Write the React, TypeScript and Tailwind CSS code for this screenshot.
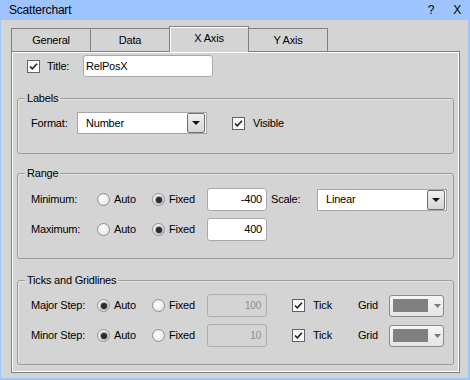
import type { ReactNode } from 'react';

function CheckBox() {
  return (
    <span className="flex h-[13px] w-[13px] shrink-0 items-center justify-center border border-[#5f6368] bg-gradient-to-br from-[#f4f4f4] to-white">
      <svg width="11" height="11" viewBox="0 0 11 11">
        <path d="M2 5.5 L4.3 7.8 L9 2.8" fill="none" stroke="#222" strokeWidth="1.6" />
      </svg>
    </span>
  );
}

function Radio({ checked, label }: { checked?: boolean; label: string }) {
  return (
    <span className="flex w-[55px] items-center gap-[4px]">
      <span className="flex h-[13px] w-[13px] shrink-0 items-center justify-center rounded-full border border-[#8e8f8f] bg-[radial-gradient(circle_at_40%_40%,#ffffff,#dedede)]">
        {checked && <span className="h-[6px] w-[6px] rounded-full bg-[#2b2b2b] shadow-[0_0_1px_1px_#9a9a9a]" />}
      </span>
      <span>{label}</span>
    </span>
  );
}

function Select({ value, width }: { value: string; width: string }) {
  return (
    <div className={`flex h-[22px] items-center justify-between border border-[#a6a6a6] bg-white ${width}`}>
      <span className="pl-[8px]">{value}</span>
      <span className="mr-px flex h-[20px] w-[18px] items-center justify-center rounded-[2px] border border-[#6f6f6f] bg-gradient-to-b from-[#f0f0f0] to-[#d6d6d6]">
        <svg width="8" height="4" viewBox="0 0 8 4">
          <path d="M0 0 H8 L4 4 Z" fill="#111" />
        </svg>
      </span>
    </div>
  );
}

function NumInput({ value, disabled }: { value: string; disabled?: boolean }) {
  return (
    <div
      className={
        disabled
          ? 'flex h-[23px] w-[60px] items-center justify-end rounded-[3px] border border-[#adadad] bg-[#d4d4d4] pr-[5px] text-[10px] text-[#8c8c8c]'
          : 'flex h-[23px] w-[60px] items-center justify-end rounded-[3px] border border-[#a8a8a8] bg-white pr-[4px]'
      }
    >
      {value}
    </div>
  );
}

function ColorCombo() {
  return (
    <div className="flex h-[22px] w-[55px] items-center rounded-[3px] border border-[#8a8a8a] bg-gradient-to-b from-[#f6f6f6] to-[#e4e4e4] pl-[3px]">
      <span className="h-[13px] w-[35px] bg-[#808080]" />
      <svg className="ml-[6px]" width="7" height="4" viewBox="0 0 7 4">
        <path d="M0 0 H7 L3.5 4 Z" fill="#7a7a7a" />
      </svg>
    </div>
  );
}

function Group({ legend, className, children }: { legend: string; className: string; children: ReactNode }) {
  return (
    <div className={`rounded-[3px] border border-[#9c9c9c] pl-[13px] shadow-[inset_1px_1px_0_#e6e6e6] ${className}`}>
      <div className="-ml-[6px] -mt-[7px] h-[13px] w-fit bg-[#d4d4d4] px-[2px] leading-[13px]">{legend}</div>
      {children}
    </div>
  );
}

function Tab({ label, className }: { label: string; className: string }) {
  return (
    <div className={`flex items-center justify-center border-[#808080] bg-[#d4d4d4] ${className}`}>
      {label}
    </div>
  );
}

export default function App() {
  return (
    <div className="flex h-[380px] w-[470px] flex-col bg-[#9dc4fd] pb-[2px] pl-px pr-[2px] font-['Liberation_Sans',Arial,sans-serif] text-[11px] tracking-[-0.2px] text-black">
      <div className="flex h-[20px] items-center pl-[8px] pr-[7px] text-[12px]">
        <span className="flex-1">Scatterchart</span>
        <span className="mr-[19px]">?</span>
        <span>X</span>
      </div>

      <div className="flex-1 bg-[#d4d4d4] pl-[10px] pt-[6px]">
        <div className="flex h-[25px] items-end">
          <Tab label="General" className="h-[23px] w-[80px] border-l border-r border-t" />
          <Tab label="Data" className="h-[23px] w-[79px] border-r border-t" />
          <Tab
            label="X Axis"
            className="relative z-10 -mb-px -ml-px h-[26px] w-[80px] border-l border-r border-t pb-[2px] shadow-[inset_1px_1px_0_#fff]"
          />
          <Tab label="Y Axis" className="h-[23px] w-[79px] border-r border-t" />
        </div>

        <div className="h-[322px] w-[449px] border border-[#808080] px-[5px] pt-[3px] shadow-[inset_1px_1px_0_#fff,inset_-1px_-1px_0_#fff]">
          <div className="flex h-[22px] items-center pl-[10px]">
            <CheckBox />
            <span className="ml-[7px] w-[36px]">Title:</span>
            <div className="flex h-[22px] w-[130px] items-center rounded-[3px] border border-[#a8a8a8] bg-white pl-[2px]">
              RelPosX
            </div>
          </div>

          <Group legend="Labels" className="mt-[21px] h-[56px]">
            <div className="mt-[7px] flex h-[22px] items-center">
              <span className="w-[46px]">Format:</span>
              <Select value="Number" width="w-[130px]" />
              <span className="ml-[25px]">
                <CheckBox />
              </span>
              <span className="ml-[8px]">Visible</span>
            </div>
          </Group>

          <Group legend="Range" className="mt-[19px] h-[86px]">
            <div className="mt-[8px] flex h-[23px] items-center">
              <span className="w-[66px]">Minimum:</span>
              <Radio label="Auto" />
              <Radio label="Fixed" checked />
              <NumInput value="-400" />
              <span className="ml-[4px] w-[46px]">Scale:</span>
              <Select value="Linear" width="w-[130px]" />
            </div>
            <div className="mt-[7px] flex h-[23px] items-center">
              <span className="w-[66px]">Maximum:</span>
              <Radio label="Auto" />
              <Radio label="Fixed" checked />
              <NumInput value="400" />
            </div>
          </Group>

          <Group legend="Ticks and Gridlines" className="mt-[21px] h-[85px]">
            {[
              ['Major Step:', '100'],
              ['Minor Step:', '10'],
            ].map(([label, val], i) => (
              <div key={label} className={`flex h-[23px] items-center ${i === 0 ? 'mt-[7px]' : 'mt-[7px]'}`}>
                <span className="w-[66px]">{label}</span>
                <Radio label="Auto" checked />
                <Radio label="Fixed" />
                <NumInput value={val} disabled />
                <span className="ml-[25px]">
                  <CheckBox />
                </span>
                <span className="ml-[8px] w-[45px]">Tick</span>
                <span className="w-[31px]">Grid</span>
                <ColorCombo />
              </div>
            ))}
          </Group>
        </div>
      </div>
    </div>
  );
}
